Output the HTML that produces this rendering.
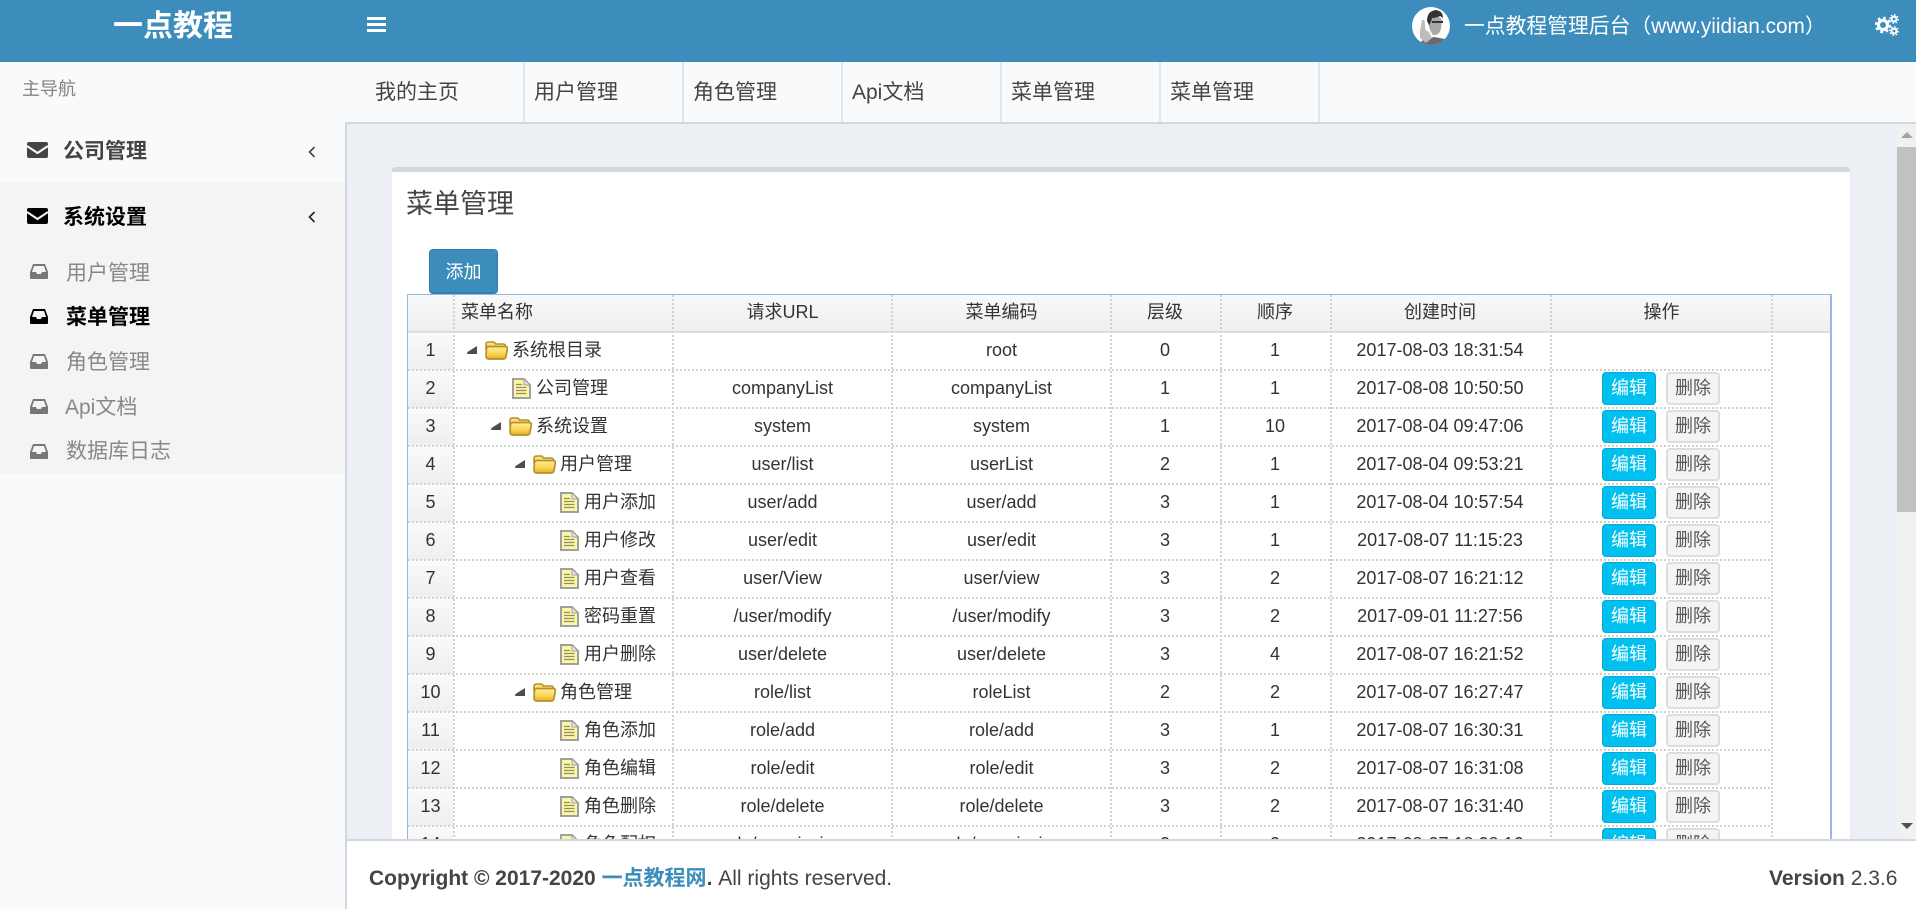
<!DOCTYPE html>
<html lang="zh-CN">
<head>
<meta charset="utf-8">
<title>菜单管理</title>
<style>
*{box-sizing:border-box}
html,body{margin:0;padding:0;width:1916px;height:909px;overflow:hidden;background:#f9fafc;font-family:"Liberation Sans","Noto Sans CJK SC",sans-serif;color:#333}
.a{position:absolute;white-space:nowrap}
#hdr{left:0;top:0;width:1916px;height:62px;background:#3c8dbc;color:#fff}
#side{left:0;top:62px;width:347px;height:847px;background:#f9fafc;border-right:2px solid #d2d6de}
#tabs{left:345px;top:62px;width:1571px;height:62px;background:#f9fafc;border-bottom:2px solid #d2d6de}
.tab{top:63px;height:60px;line-height:60px;font-size:21px;color:#444}
.sep{top:62px;width:2px;height:60px;background:#e1e6ee}
#content{left:347px;top:124px;width:1550px;height:715px;background:#ecf0f5}
#box{left:392px;top:167px;width:1458px;height:680px;background:#fff;border-top:5px solid #d2d6de;border-radius:4px 4px 0 0;box-shadow:0 1px 1px rgba(0,0,0,.1)}
#gridwrap{left:0;top:0;width:1916px;height:839px;overflow:hidden;pointer-events:none}
#gridb{left:407px;top:294px;width:1425px;height:560px;border:1px solid #95b8e7;border-right-width:2px}
#ghead{left:408px;top:295px;width:1422px;height:38px;background:linear-gradient(#f9f9f9,#efefef);border-bottom:2px solid #ddd}
.h{top:295px;height:35px;line-height:35px;font-size:18px;color:#333;text-align:center}
#rows{left:0;top:333px;width:1916px}
.r{position:relative;height:38px;width:1916px;font-size:18px;color:#333}
.r>span,.r>svg,.r>i{position:absolute;white-space:nowrap}
.r>span{top:0;height:35px;line-height:35px}
.r:before{content:"";position:absolute;left:408px;top:0;width:45px;height:37px;background:linear-gradient(#fafafa,#eeeeee)}
.r:after{content:"";position:absolute;left:408px;top:36px;width:1364px;height:2px;background:repeating-linear-gradient(90deg,#d2d2d2 0 2px,transparent 2px 4px)}
.n{left:408px;width:45px;text-align:center;z-index:1}
.u{left:673px;width:219px;text-align:center}
.e{left:892px;width:219px;text-align:center}
.l{left:1110px;width:110px;text-align:center}
.o{left:1220px;width:110px;text-align:center}
.d{left:1330px;width:220px;text-align:center}
.be{left:1602px;width:54px;top:1px!important;height:33px!important;line-height:30px!important;background:#00c0ef;border:1px solid #00acd6;border-radius:4px;color:#fff;text-align:center}
.bd{left:1666px;width:54px;top:1px!important;height:33px!important;line-height:29px!important;background:#f4f4f4;border:2px solid #ddd;border-radius:4px;color:#555;text-align:center}
.v{top:295px;width:2px;height:544px;background:repeating-linear-gradient(#d2d2d2 0 2px,transparent 2px 4px)}
#foot{left:347px;top:839px;width:1569px;height:70px;background:#fff;border-top:2px solid #d2d6de;color:#444;font-size:21px}
.si{left:66px;font-size:21px;color:#888;height:36px;line-height:36px}
.ic{left:30px}
</style>
</head>
<body>
<svg width="0" height="0" style="position:absolute">
<defs>
<linearGradient id="fy" x1="0" y1="0" x2="0" y2="1"><stop offset="0" stop-color="#ffefa0"/><stop offset=".55" stop-color="#fbd654"/><stop offset="1" stop-color="#e6ae30"/></linearGradient>
<symbol id="tri" viewBox="0 0 10 8"><polygon points="10,0 10,8 0,8 0.5,6" fill="#4d4d4d"/></symbol>
<symbol id="fold" viewBox="0 0 23 19">
<path d="M1 6V3.5Q1 1 3.5 1H8Q9.5 1 10.5 3H18Q20.5 3 20.5 5.5V8H1Z" fill="#fbe07a" stroke="#b88f2a" stroke-width="1.6"/>
<path d="M1.5 7Q2 5.5 4 5.5H20Q22.8 5.5 22.3 8L21 15.5Q20.6 18 18 18H4Q1 18 1 15Z" fill="url(#fy)" stroke="#b88f2a" stroke-width="1.7"/>
</symbol>
<symbol id="leaf" viewBox="0 0 19 21">
<path d="M1 1H12L18 7V20H1Z" fill="#fff6a0" stroke="#a0a0a0" stroke-width="2"/>
<path d="M12 1V7H18Z" fill="#e9e9e9" stroke="#a0a0a0" stroke-width="1"/>
<path d="M4 6.5H10M4 9.5H14.5M4 12.5H14.5M4 15.5H14.5" stroke="#8f8f70" stroke-width="1.3"/>
</symbol>
<symbol id="env" viewBox="0 0 21 16"><rect width="21" height="16" rx="2" fill="currentColor"/></symbol>
</defs>
</svg>

<!-- header -->
<div class="a" id="hdr"></div>
<div class="a" style="left:113px;top:6px;height:42px;line-height:42px;font-size:30px;font-weight:bold;color:#fff">一点教程</div>
<svg class="a" style="left:367px;top:17px" width="19" height="16"><rect width="19" height="3" y="0" fill="#fff"/><rect width="19" height="3" y="6" fill="#fff"/><rect width="19" height="3" y="12" fill="#fff"/></svg>
<svg class="a" style="left:1412px;top:7px" width="38" height="38" viewBox="0 0 38 38">
<defs><clipPath id="cav"><circle cx="19" cy="19" r="19"/></clipPath></defs>
<g clip-path="url(#cav)">
<rect width="38" height="38" fill="#fff"/>
<path d="M6 38L11 33 22 30 33 32 38 38Z" fill="#6a6a6a"/>
<path d="M16 10Q26 6 30 13L29 22Q27 29 21 28 16 22 16 10Z" fill="#a8a8a8"/>
<path d="M15 14Q15 4 24 3 31 4 31 11L28 9Q24 11 20 11 19 16 17 18Z" fill="#333"/>
<path d="M20 14H31V16H26L24 16H20Z" fill="#333"/>
<path d="M10 13L12.5 13 13.5 23 17 25 20 31 14 36 8 31 8 24Z" fill="#bcbcbc"/>
</g>
</svg>
<div class="a" style="left:1464px;top:6px;height:42px;line-height:42px;font-size:20.8px;color:#fff">一点教程管理后台（www.yiidian.com）</div>
<svg class="a" style="left:1875px;top:14px" width="24" height="22" viewBox="0 0 24 22" fill="none" stroke="#fff">
<circle cx="8" cy="11" r="4.6" stroke-width="3.2"/>
<circle cx="8" cy="11" r="7.2" stroke-width="2.2" stroke-dasharray="2.7 2.95"/>
<circle cx="19" cy="5" r="2.4" stroke-width="2"/>
<circle cx="19" cy="5" r="4.1" stroke-width="1.6" stroke-dasharray="1.6 1.6"/>
<circle cx="19" cy="17" r="2.4" stroke-width="2"/>
<circle cx="19" cy="17" r="4.1" stroke-width="1.6" stroke-dasharray="1.6 1.6"/>
</svg>

<!-- sidebar -->
<div class="a" id="side"></div>
<div class="a" style="left:0;top:183px;width:345px;height:291px;background:#f4f4f5"></div>
<div class="a" style="left:22px;top:72px;height:34px;line-height:34px;font-size:18px;color:#848484">主导航</div>

<svg class="a" style="left:27px;top:142px;color:#444" width="21" height="16" viewBox="0 0 21 16"><use href="#env"/><path d="M0 4L10.5 11 21 4" fill="none" stroke="#f9fafc" stroke-width="2"/></svg>
<div class="a" style="left:63px;top:134px;height:36px;line-height:36px;font-size:21px;font-weight:bold;color:#444">公司管理</div>
<svg class="a" style="left:308px;top:146px" width="8" height="12" viewBox="0 0 8 12"><path d="M6.5 1L1.5 6 6.5 11" fill="none" stroke="#444" stroke-width="1.6"/></svg>

<svg class="a" style="left:27px;top:208px;color:#000" width="21" height="16" viewBox="0 0 21 16"><use href="#env"/><path d="M0 4L10.5 11 21 4" fill="none" stroke="#f4f4f5" stroke-width="2"/></svg>
<div class="a" style="left:63px;top:200px;height:36px;line-height:36px;font-size:21px;font-weight:bold;color:#000">系统设置</div>
<svg class="a" style="left:308px;top:211px" width="8" height="12" viewBox="0 0 8 12"><path d="M6.5 1L1.5 6 6.5 11" fill="none" stroke="#222" stroke-width="1.6"/></svg>

<svg class="a ic" style="top:264px" width="18" height="15" viewBox="0 0 18 15"><path d="M3 0H15L18 8V14Q18 15 17 15H1Q0 15 0 14V8Z" fill="#777"/><path d="M4 2H14L16 8H12L11 10H7L6 8H2Z" fill="#f4f4f5"/></svg>
<div class="a si" style="top:256px">用户管理</div>
<svg class="a ic" style="top:309px" width="18" height="15" viewBox="0 0 18 15"><path d="M3 0H15L18 8V14Q18 15 17 15H1Q0 15 0 14V8Z" fill="#000"/><path d="M4 2H14L16 8H12L11 10H7L6 8H2Z" fill="#f4f4f5"/></svg>
<div class="a si" style="top:300px;color:#000;font-weight:bold">菜单管理</div>
<svg class="a ic" style="top:354px" width="18" height="15" viewBox="0 0 18 15"><path d="M3 0H15L18 8V14Q18 15 17 15H1Q0 15 0 14V8Z" fill="#777"/><path d="M4 2H14L16 8H12L11 10H7L6 8H2Z" fill="#f4f4f5"/></svg>
<div class="a si" style="top:345px">角色管理</div>
<svg class="a ic" style="top:399px" width="18" height="15" viewBox="0 0 18 15"><path d="M3 0H15L18 8V14Q18 15 17 15H1Q0 15 0 14V8Z" fill="#777"/><path d="M4 2H14L16 8H12L11 10H7L6 8H2Z" fill="#f4f4f5"/></svg>
<div class="a si" style="top:390px;left:65px">Api文档</div>
<svg class="a ic" style="top:444px" width="18" height="15" viewBox="0 0 18 15"><path d="M3 0H15L18 8V14Q18 15 17 15H1Q0 15 0 14V8Z" fill="#777"/><path d="M4 2H14L16 8H12L11 10H7L6 8H2Z" fill="#f4f4f5"/></svg>
<div class="a si" style="top:434px">数据库日志</div>

<!-- tabs -->
<div class="a" id="tabs"></div>
<div class="a tab" style="left:375px">我的主页</div>
<div class="a sep" style="left:523px"></div>
<div class="a tab" style="left:534px">用户管理</div>
<div class="a sep" style="left:682px"></div>
<div class="a tab" style="left:693px">角色管理</div>
<div class="a sep" style="left:841px"></div>
<div class="a tab" style="left:852px">Api文档</div>
<div class="a sep" style="left:1000px"></div>
<div class="a tab" style="left:1011px">菜单管理</div>
<div class="a sep" style="left:1159px"></div>
<div class="a tab" style="left:1170px">菜单管理</div>
<div class="a sep" style="left:1318px"></div>

<!-- content -->
<div class="a" id="content"></div>
<div class="a" id="box"></div>
<div class="a" style="left:406px;top:184px;height:40px;line-height:40px;font-size:27px;color:#444">菜单管理</div>
<div class="a" style="left:429px;top:249px;width:69px;height:45px;line-height:44px;background:#3c8dbc;border:1px solid #367fa9;border-bottom-width:2px;border-radius:4px;color:#fff;font-size:18px;text-align:center">添加</div>

<div class="a" id="gridwrap">
<div class="a" id="gridb"></div>
<div class="a" id="ghead"></div>
<div class="a h" style="left:461px">菜单名称</div>
<div class="a h" style="left:673px;width:219px">请求URL</div>
<div class="a h" style="left:892px;width:219px">菜单编码</div>
<div class="a h" style="left:1110px;width:110px">层级</div>
<div class="a h" style="left:1220px;width:110px">顺序</div>
<div class="a h" style="left:1330px;width:220px">创建时间</div>
<div class="a h" style="left:1551px;width:221px">操作</div>

<div class="a" id="rows">
<div class="r"><span class="n">1</span><svg style="left:467px;top:13px" width="10" height="8"><use href="#tri"/></svg><svg style="left:485px;top:8px" width="23" height="19"><use href="#fold"/></svg><span style="left:512px">系统根目录</span><span class="e">root</span><span class="l">0</span><span class="o">1</span><span class="d">2017-08-03 18:31:54</span></div>

<div class="r"><span class="n">2</span><svg style="left:512px;top:7px" width="19" height="21"><use href="#leaf"/></svg><span style="left:536px">公司管理</span><span class="u">companyList</span><span class="e">companyList</span><span class="l">1</span><span class="o">1</span><span class="d">2017-08-08 10:50:50</span><span class="be">编辑</span><span class="bd">删除</span></div>

<div class="r"><span class="n">3</span><svg style="left:491px;top:13px" width="10" height="8"><use href="#tri"/></svg><svg style="left:509px;top:8px" width="23" height="19"><use href="#fold"/></svg><span style="left:536px">系统设置</span><span class="u">system</span><span class="e">system</span><span class="l">1</span><span class="o">10</span><span class="d">2017-08-04 09:47:06</span><span class="be">编辑</span><span class="bd">删除</span></div>

<div class="r"><span class="n">4</span><svg style="left:515px;top:13px" width="10" height="8"><use href="#tri"/></svg><svg style="left:533px;top:8px" width="23" height="19"><use href="#fold"/></svg><span style="left:560px">用户管理</span><span class="u">user/list</span><span class="e">userList</span><span class="l">2</span><span class="o">1</span><span class="d">2017-08-04 09:53:21</span><span class="be">编辑</span><span class="bd">删除</span></div>

<div class="r"><span class="n">5</span><svg style="left:560px;top:7px" width="19" height="21"><use href="#leaf"/></svg><span style="left:584px">用户添加</span><span class="u">user/add</span><span class="e">user/add</span><span class="l">3</span><span class="o">1</span><span class="d">2017-08-04 10:57:54</span><span class="be">编辑</span><span class="bd">删除</span></div>

<div class="r"><span class="n">6</span><svg style="left:560px;top:7px" width="19" height="21"><use href="#leaf"/></svg><span style="left:584px">用户修改</span><span class="u">user/edit</span><span class="e">user/edit</span><span class="l">3</span><span class="o">1</span><span class="d">2017-08-07 11:15:23</span><span class="be">编辑</span><span class="bd">删除</span></div>

<div class="r"><span class="n">7</span><svg style="left:560px;top:7px" width="19" height="21"><use href="#leaf"/></svg><span style="left:584px">用户查看</span><span class="u">user/View</span><span class="e">user/view</span><span class="l">3</span><span class="o">2</span><span class="d">2017-08-07 16:21:12</span><span class="be">编辑</span><span class="bd">删除</span></div>

<div class="r"><span class="n">8</span><svg style="left:560px;top:7px" width="19" height="21"><use href="#leaf"/></svg><span style="left:584px">密码重置</span><span class="u">/user/modify</span><span class="e">/user/modify</span><span class="l">3</span><span class="o">2</span><span class="d">2017-09-01 11:27:56</span><span class="be">编辑</span><span class="bd">删除</span></div>

<div class="r"><span class="n">9</span><svg style="left:560px;top:7px" width="19" height="21"><use href="#leaf"/></svg><span style="left:584px">用户删除</span><span class="u">user/delete</span><span class="e">user/delete</span><span class="l">3</span><span class="o">4</span><span class="d">2017-08-07 16:21:52</span><span class="be">编辑</span><span class="bd">删除</span></div>

<div class="r"><span class="n">10</span><svg style="left:515px;top:13px" width="10" height="8"><use href="#tri"/></svg><svg style="left:533px;top:8px" width="23" height="19"><use href="#fold"/></svg><span style="left:560px">角色管理</span><span class="u">role/list</span><span class="e">roleList</span><span class="l">2</span><span class="o">2</span><span class="d">2017-08-07 16:27:47</span><span class="be">编辑</span><span class="bd">删除</span></div>

<div class="r"><span class="n">11</span><svg style="left:560px;top:7px" width="19" height="21"><use href="#leaf"/></svg><span style="left:584px">角色添加</span><span class="u">role/add</span><span class="e">role/add</span><span class="l">3</span><span class="o">1</span><span class="d">2017-08-07 16:30:31</span><span class="be">编辑</span><span class="bd">删除</span></div>

<div class="r"><span class="n">12</span><svg style="left:560px;top:7px" width="19" height="21"><use href="#leaf"/></svg><span style="left:584px">角色编辑</span><span class="u">role/edit</span><span class="e">role/edit</span><span class="l">3</span><span class="o">2</span><span class="d">2017-08-07 16:31:08</span><span class="be">编辑</span><span class="bd">删除</span></div>

<div class="r"><span class="n">13</span><svg style="left:560px;top:7px" width="19" height="21"><use href="#leaf"/></svg><span style="left:584px">角色删除</span><span class="u">role/delete</span><span class="e">role/delete</span><span class="l">3</span><span class="o">2</span><span class="d">2017-08-07 16:31:40</span><span class="be">编辑</span><span class="bd">删除</span></div>

<div class="r"><span class="n">14</span><svg style="left:560px;top:7px" width="19" height="21"><use href="#leaf"/></svg><span style="left:584px">角色配权</span><span class="u">role/permission</span><span class="e">role/permission</span><span class="l">3</span><span class="o">2</span><span class="d">2017-08-07 18:08:16</span><span class="be">编辑</span><span class="bd">删除</span></div>
</div>

<div class="a v" style="left:453px"></div>
<div class="a v" style="left:672px"></div>
<div class="a v" style="left:891px"></div>
<div class="a v" style="left:1110px"></div>
<div class="a v" style="left:1220px"></div>
<div class="a v" style="left:1330px"></div>
<div class="a v" style="left:1550px"></div>
<div class="a v" style="left:1771px"></div>
</div>

<!-- scrollbar -->
<div class="a" style="left:1897px;top:124px;width:19px;height:715px;background:#f1f1f1"></div>
<div class="a" style="left:1897px;top:147px;width:19px;height:365px;background:#c1c1c1"></div>
<svg class="a" style="left:1901px;top:132px" width="12" height="6"><polygon points="6,0 12,6 0,6" fill="#a3a3a3"/></svg>
<svg class="a" style="left:1901px;top:823px" width="12" height="6"><polygon points="0,0 12,0 6,6" fill="#505050"/></svg>

<!-- footer -->
<div class="a" id="foot"></div>
<div class="a" style="left:369px;top:860px;height:38px;line-height:38px;font-size:21px;color:#444"><b>Copyright © 2017-2020 <span style="color:#3c8dbc">一点教程网</span>.</b> All rights reserved.</div>
<div class="a" style="left:1769px;top:860px;height:38px;line-height:38px;font-size:21px;color:#444"><b>Version</b> 2.3.6</div>
</body>
</html>
